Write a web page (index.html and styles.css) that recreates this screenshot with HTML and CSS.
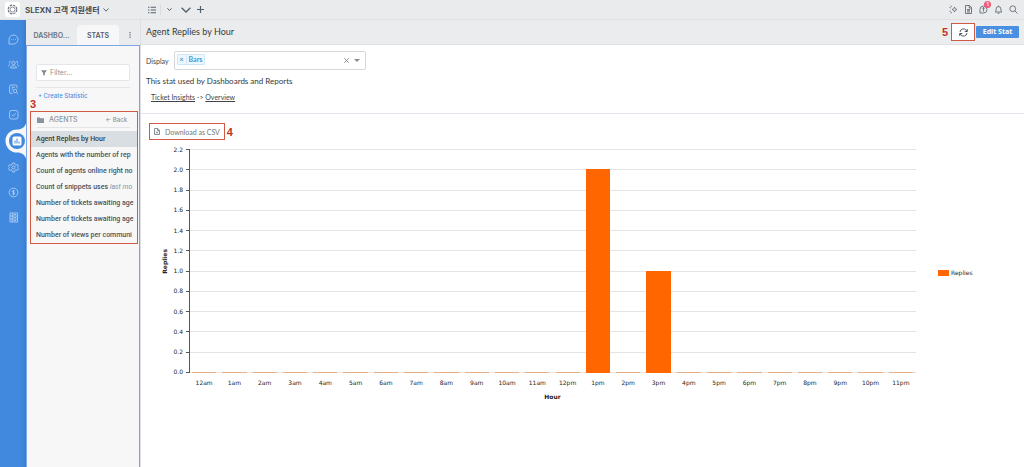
FILE: index.html
```html
<!DOCTYPE html>
<html lang="ko">
<head>
<meta charset="utf-8">
<title>Agent Replies by Hour</title>
<link rel="stylesheet" href="styles.css">
</head>
<body>
<div class="app">
  <header class="topbar">
    <div class="brand">
      <span class="logo"><svg width="11" height="11" viewBox="0 0 22 22" fill="none" stroke="#6a747d" stroke-width="1.6"><circle cx="11" cy="11" r="8.6" stroke-width="2.4" stroke-dasharray="5 1.75"/><circle cx="11" cy="11" r="5"/></svg></span>
      <button class="workspace" type="button">SLEXN 고객 지원센터
        <svg width="6" height="4" viewBox="0 0 6 4" fill="none" stroke="#5b6670"><path d="M.5.5L3 3.2 5.500.5"/></svg>
      </button>
    </div>
    <nav class="tools" aria-label="Views">
      <button type="button" aria-label="List"><svg width="8" height="8" viewBox="0 0 9 8" stroke="#52606c" stroke-width="1.200"><path d="M0 1h1.600M0 4h1.600M0 7h1.600M3 1h6M3 4h6M3 7h6"/></svg></button>
      <button class="list-menu" type="button" aria-label="List options"><svg width="5" height="3" viewBox="0 0 5 3" fill="none" stroke="#52606c"><path d="M.4.4l2.100 2L4.600.4"/></svg></button>
      <button type="button" aria-label="Expand"><svg width="10" height="6" viewBox="0 0 10 6" fill="none" stroke="#52606c" stroke-width="1.300"><path d="M.6.7L5 5 9.400.7"/></svg></button>
      <button type="button" aria-label="Add"><svg width="7" height="7" viewBox="0 0 7 7" stroke="#52606c" stroke-width="1.200"><path d="M3.500 0v7M0 3.500h7"/></svg></button>
    </nav>
    <div class="status">
      <button type="button" aria-label="Assistant"><svg width="9" height="9" viewBox="0 0 18 18" fill="none" stroke="#5b6670" stroke-width="1.500"><path d="M11 4l1.500 3.500L16 9l-3.500 1.500L11 14l-1.500-3.500L6 9l3.500-1.500zM4 1l1 3M1 5l3 1M4 17l1-3M1 13l3-1"/></svg></button>
      <button type="button" aria-label="Documents"><svg width="9" height="9" viewBox="0 0 18 18" fill="none" stroke="#5b6670" stroke-width="1.700"><path d="M3 1h8l4 4v12H3zM10.500 1v5H15M6 9h6M6 11.500h6M6 14h6"/></svg></button>
      <button class="chat" type="button" aria-label="Messages, 1 new"><svg width="9" height="9" viewBox="0 0 18 18" fill="none" stroke="#5b6670" stroke-width="1.700"><path d="M2 16V9a7 7 0 1 1 7 7zM9 5v8M6.500 7L9 5l2.500 2"/></svg><span class="count">1</span></button>
      <button type="button" aria-label="Notifications"><svg width="9" height="9" viewBox="0 0 18 18" fill="none" stroke="#5b6670" stroke-width="1.700"><path d="M9 1v2M2 14c2-1.500 2.200-3 2.200-6a4.800 4.800 0 0 1 9.600 0c0 3 .2 4.500 2.200 6zM7 16.500h4"/></svg></button>
      <button type="button" aria-label="Search"><svg width="9" height="9" viewBox="0 0 18 18" fill="none" stroke="#5b6670" stroke-width="1.700"><circle cx="7.500" cy="7.500" r="5.800"/><path d="M12 12l5 5"/></svg></button>
    </div>
  </header>

  <nav class="rail" aria-label="Main">
    <a href="#tickets" aria-label="Tickets"><svg viewBox="0 0 22 22"><path d="M2 20v-9a9 9 0 1 1 9 9zM6.500 11h1.500M10.300 11h1.500M14 11h1.500"/></svg></a>
    <a href="#people" aria-label="People"><svg viewBox="0 0 22 22"><circle cx="11" cy="8" r="3.300"/><path d="M5 18c0-6 12-6 12 0zM5.500 4.500a2.500 2.500 0 0 0-1.500 4.700M16.500 4.500a2.500 2.500 0 0 1 1.500 4.700M1 15c0-2 1-3.500 3-4M21 15c0-2-1-3.500-3-4"/></svg></a>
    <a href="#knowledge" aria-label="Knowledge"><svg viewBox="0 0 22 22"><path d="M9 19H6a3 3 0 0 1-3-3V5a3 3 0 0 1 3-3h9a3 3 0 0 1 3 3v4M7 6.500h7M7 10h3M7 13.500h1"/><circle cx="14" cy="14" r="3.500"/><path d="M16.500 16.500l3.500 3.500"/></svg></a>
    <a href="#tasks" aria-label="Tasks"><svg viewBox="0 0 22 22"><rect x="3" y="3" width="17" height="17" rx="4"/><path d="M7.500 11.500l3 3 5-6"/></svg></a>
    <a class="active" href="#reports" aria-label="Reports"><svg viewBox="0 0 22 36"><path class="bay" d="M22 0v36c-1-4-4-6.500-9-6.500a11.500 11.500 0 0 1 0-23C18 6.500 21 4 22 0z"/><circle class="disc" cx="13" cy="18" r="8"/><rect class="tile" x="8.500" y="13.500" width="9" height="9" rx="1.500"/><path class="bars" d="M11 20.500v-3M13 20.500v-5M15 20.500v-2"/></svg></a>
    <a href="#admin" aria-label="Admin"><svg viewBox="0 0 22 22"><path d="M9 2h4l.7 3 2.300 1.300 3-.9 2 3.500L18.800 11l2.200 2.100-2 3.500-3-.9-2.300 1.300L13 20H9l-.7-3L6 15.700l-3 .9-2-3.500L3.200 11 1 8.900l2-3.500 3 .9L8.300 5z"/><circle cx="11" cy="11" r="3"/></svg></a>
    <a href="#billing" aria-label="Billing"><svg viewBox="0 0 22 22"><circle cx="11" cy="11" r="8.700"/><path d="M13.500 8.500c-1-1.500-5-1.300-5 .7 0 2.500 5 1.200 5 3.700 0 2-4 2.200-5.200.6M11 5.500v11"/></svg></a>
    <a href="#storage" aria-label="Storage"><svg viewBox="0 0 22 22"><path d="M4 2h15v18H4zM4 8h15M4 14h15M8.500 2v18M11 5h5M11 11h5M11 17h5"/></svg></a>
  </nav>

  <aside class="sidebar">
    <div class="tabs" role="tablist">
      <button type="button" role="tab" aria-selected="false">DASHBO...</button>
      <button class="selected" type="button" role="tab" aria-selected="true">STATS</button>
      <button class="more" type="button" aria-label="More"><svg width="2" height="6" viewBox="0 0 2 6" fill="#5b6670"><circle cx="1" cy=".8" r=".7"/><circle cx="1" cy="3" r=".7"/><circle cx="1" cy="5.200" r=".7"/></svg></button>
    </div>
    <div class="panel">
      <div class="search">
        <label class="filter">
          <svg width="6" height="6" viewBox="0 0 6 6" fill="#7e8890"><path d="M0 .3h6L3.800 3v2.700L2.200 5V3z"/></svg>
          <input type="text" placeholder="Filter..." aria-label="Filter statistics">
        </label>
        <a class="create" href="#create">+ Create Statistic</a>
      </div>
      <section class="group">
        <span class="mark mark-above">3</span>
        <div class="group-head">
          <svg width="7" height="6" viewBox="0 0 7 6" fill="#8a939b"><path d="M0 .5h2.700l.7.8H7V6H0z"/></svg>
          <h2>AGENTS</h2>
          <a href="#back">← Back</a>
        </div>
        <ul>
          <li class="current"><a href="#s1">Agent Replies by Hour</a></li>
          <li><a href="#s2">Agents with the number of rep</a></li>
          <li><a href="#s3">Count of agents online right no</a></li>
          <li><a href="#s4">Count of snippets uses <em>last mo</em></a></li>
          <li><a href="#s5">Number of tickets awaiting age</a></li>
          <li><a href="#s6">Number of tickets awaiting age</a></li>
          <li><a href="#s7">Number of views per communi</a></li>
        </ul>
      </section>
    </div>
  </aside>

  <main class="content">
    <div class="page-head">
      <h1>Agent Replies by Hour</h1>
      <span class="mark">5</span>
      <button class="refresh" type="button" aria-label="Refresh"><svg width="9" height="9" viewBox="0 0 18 18" fill="none" stroke="#3f474e" stroke-width="1.800"><path d="M2 8a7 7 0 0 1 12.500-3.500L16.500 7M16.500 2v5h-5M16 10a7 7 0 0 1-12.500 3.500L1.500 11M1.500 16v-5h5"/></svg></button>
      <button class="edit" type="button">Edit Stat</button>
    </div>
    <section class="settings">
      <div class="field">
        <label for="display">Display</label>
        <div class="combo">
          <span class="chip"><button type="button" aria-label="Remove Bars">×</button><span>Bars</span></span>
          <input id="display" type="text">
          <button type="button" aria-label="Clear"><svg width="5" height="5" viewBox="0 0 5 5" stroke="#8c8c8c"><path d="M.3.3l4.400 4.400M4.700.3L.3 4.700"/></svg></button>
          <button type="button" aria-label="Open"><svg width="6" height="3" viewBox="0 0 6 3" fill="#8c8c8c"><path d="M0 0h6L3 3z"/></svg></button>
        </div>
      </div>
      <h2>This stat used by Dashboards and Reports</h2>
      <p class="trail"><a href="#insights">Ticket Insights</a> -&gt; <a href="#overview">Overview</a></p>
    </section>
    <section class="report">
      <div class="export">
        <button type="button"><svg width="6" height="7" viewBox="0 0 12 14" fill="none" stroke="#6f767c" stroke-width="1.600"><path d="M1 1h6.500L11 4.500V13H1zM7 1v4h4M4 7l4 4M8 7l-4 4"/></svg>Download as CSV</button>
        <span class="mark">4</span>
      </div>
      <figure class="chart">
        <div class="y-title"><span>Replies</span></div>
        <div class="y-axis">
          <span>2.2</span><span>2.0</span><span>1.8</span><span>1.6</span><span>1.4</span><span>1.2</span><span>1.0</span><span>0.8</span><span>0.6</span><span>0.4</span><span>0.2</span><span>0.0</span>
        </div>
        <div class="grid-lines"><i></i><i></i><i></i><i></i><i></i><i></i><i></i><i></i><i></i><i></i><i></i><i></i></div>
        <div class="columns">
          <i></i><i></i><i></i><i></i><i></i><i></i><i></i><i></i><i></i><i></i><i></i><i></i><i></i><i class="filled" style="height:90.9%"></i><i></i><i class="filled" style="height:45.5%"></i><i></i><i></i><i></i><i></i><i></i><i></i><i></i><i></i>
        </div>
        <div class="x-axis">
          <span>12am</span><span>1am</span><span>2am</span><span>3am</span><span>4am</span><span>5am</span><span>6am</span><span>7am</span><span>8am</span><span>9am</span><span>10am</span><span>11am</span><span>12pm</span><span>1pm</span><span>2pm</span><span>3pm</span><span>4pm</span><span>5pm</span><span>6pm</span><span>7pm</span><span>8pm</span><span>9pm</span><span>10pm</span><span>11pm</span>
        </div>
        <div class="x-title">Hour</div>
        <figcaption class="legend"><i></i>Replies</figcaption>
      </figure>
    </section>
  </main>
</div>
</body>
</html>
```

FILE: styles.css
```css
* { box-sizing: border-box; }
body { margin: 0; font-family: Lato, "Noto Sans CJK KR", sans-serif; font-size: 7px; color: #404448; background: #fff; }
button { display: inline-flex; align-items: center; justify-content: center; padding: 0; border: 0; background: none; font: inherit; color: inherit; }
h1, h2, p, ul, figure { margin: 0; padding: 0; font-weight: 400; }
ul { list-style: none; }
a { color: inherit; text-decoration: none; }
svg { display: block; flex: none; }

.app { display: grid; grid-template: 20px 1fr / 26px 114px minmax(0, 1fr); min-height: 100vh; }
.mark { font: 700 11px/12px "Liberation Sans", sans-serif; color: #c0341d; }

.topbar { grid-column: 1 / -1; display: flex; align-items: center; background: #e9ebed; border-bottom: 1px solid #dfe1e4; }
.brand { display: flex; align-items: center; gap: 5px; width: 140px; padding-left: 5px; }
.logo { display: grid; place-items: center; width: 15px; height: 15px; border-radius: 2px; background: #fff; }
.workspace { gap: 3px; font: 600 8px/12px Inter, "Noto Sans CJK KR", sans-serif; color: #40484f; white-space: nowrap; }
.tools { display: flex; align-items: center; gap: 9px; height: 100%; padding-left: 8px; }
.tools button:nth-child(4) { margin-left: -3px; }
.list-menu { height: 10px; margin-left: -5px; padding-left: 6px; border-left: 1px solid #d9dcdf; }
.status { display: flex; gap: 6px; margin-left: auto; padding-right: 6px; }
.chat { position: relative; }
.count { position: absolute; left: 5px; top: -4px; width: 7px; height: 7px; border-radius: 50%; background: #f2577c; color: #fff; font: 700 5px/7px Inter, sans-serif; text-align: center; }

.rail { display: flex; flex-direction: column; align-items: center; gap: 14px; padding-top: 14px; background: linear-gradient(90deg, #4189de 80%, #3b7dcd); }
.rail a { display: block; }
.rail svg { width: 11px; height: 11px; fill: none; stroke: #b9d6f5; stroke-width: 1.6; }
.rail .active { align-self: flex-end; margin: -11px 0; }
.rail .active svg { width: 22px; height: 36px; }
.rail .active .bay { fill: #f7f7f8; stroke: none; }
.rail .active .disc { fill: #4189de; stroke: none; }
.rail .active .tile { fill: #fff; stroke: none; }
.rail .active .bars { stroke: #4189de; stroke-width: 1; }

.sidebar { display: flex; flex-direction: column; background: #f7f7f8; font-family: Inter, sans-serif; color: #4a545d; }
.tabs { display: flex; height: 25px; padding-top: 5px; background: #e9ebed; font-size: 7px; font-weight: 600; color: #6a737b; }
.tabs button { flex: 1 1 50px; }
.tabs .selected { flex: 0 1 42px; background: #f7f7f8; border-radius: 4px 4px 0 0; color: #56606a; }
.tabs .more { flex: 0 0 21px; }
.panel { flex: 1; padding-bottom: 8px; border: 1px solid #7da6e6; border-width: 1px 1px 0; }
.search { padding: 18px 9px 0; }
.filter { display: flex; align-items: center; gap: 3px; height: 17px; padding: 0 4px; border: 1px solid #e4e6e9; border-radius: 2px; background: #fff; }
.filter input { min-width: 0; flex: 1; padding: 0; border: 0; outline: 0; background: none; font: 7px Inter, sans-serif; color: #4a545d; }
.filter input::placeholder { color: #8b939a; opacity: 1; }
.create { display: block; margin-top: 6px; padding: 4px 2px 0; border-top: 1px solid #e4e5e7; font-size: 6px; line-height: 8px; font-weight: 500; color: #4a90e2; }
.group { position: relative; margin: 11px 1px 0 3px; border: 1px solid #cf5a46; }
.mark-above { position: absolute; left: -1px; top: -14px; }
.group-head { display: flex; align-items: center; gap: 5px; height: 16px; margin: 0 7px 3px 6px; border-bottom: 1px solid #e2e4e6; font-size: 6px; font-weight: 500; color: #8a939b; }
.group-head h2 { flex: 1; font: inherit; font-size: 7px; }
.group-head a { padding-right: 3px; }
.group li { height: 16px; padding: 0 4px 0 5px; font: 500 7px/16px Roboto, sans-serif; }
.group li a { display: block; white-space: nowrap; }
.group li em { font-weight: 400; color: #8a939b; }
.group .current { background: #d9dee2; color: #343d45; }

.content { display: flex; flex-direction: column; border-left: 1px solid #dcdfe6; }
.page-head { display: flex; align-items: center; height: 25px; padding: 0 5px; background: #ebecee; border-bottom: 1px solid #dfe1e3; }
.page-head h1 { flex: 1; font-size: 9px; line-height: 12px; color: #36393c; }
.refresh { width: 24px; height: 18px; margin: 0 1px 0 3px; border: 1px solid #cf5a46; background: #fff; }
.edit { width: 43px; height: 12px; border-radius: 1px; background: #4a90e2; font: 700 7px/12px "Open Sans", sans-serif; color: #fff; }
.settings { padding: 6px 5px 11px; border-bottom: 1px solid #e1e4ea; }
.field { display: flex; align-items: center; gap: 5px; }
.combo { display: flex; align-items: center; gap: 5px; flex: 0 1 192px; min-width: 0; height: 19px; padding: 0 5px 0 2px; border: 1px solid #d5d7d9; border-radius: 2px; }
.combo input { flex: 1; min-width: 0; border: 0; outline: 0; padding: 0; font: inherit; }
.chip { display: flex; align-self: flex-start; height: 11px; margin-top: 2px; border: 1px solid #cfe5f8; border-radius: 1px; background: #edf7ff; font-size: 7px; line-height: 9px; font-weight: 700; color: #4598d4; }
.chip button { width: 9px; border-right: 1px solid #cfe5f8; }
.chip span { padding: 0 2px; }
.settings h2 { margin-top: 5px; font-size: 8px; line-height: 12px; color: #36393c; }
.trail { margin: 5px 0 0 5px; line-height: 10px; }
.trail a { text-decoration: underline; }

.report { padding: 9px 8px 0; }
.export { display: flex; align-items: center; gap: 2px; }
.export button { gap: 5px; height: 17px; padding: 0 4px; border: 1px solid #cf5a46; color: #6f767c; }
.chart { display: grid; grid-template: 224px 20px 10px / 22px 18px minmax(0, 1fr) 100px; margin-top: 9px; font: 6px/8px "DejaVu Sans", sans-serif; color: #1e1e1e; }
.y-title { grid-area: 1 / 1; display: flex; align-items: center; padding-left: 12px; font-weight: 700; }
.y-title span { writing-mode: vertical-rl; rotate: 180deg; }
.y-axis { grid-area: 1 / 2; display: flex; flex-direction: column; justify-content: space-between; margin: -4px 0; }
.y-axis span { display: flex; align-items: center; justify-content: flex-end; gap: 3px; height: 9px; }
.y-axis span::after { content: ""; width: 3px; height: 1px; background: #555; }
.grid-lines { grid-area: 1 / 3; display: flex; flex-direction: column; justify-content: space-between; border-left: 1px solid #555; }
.grid-lines i { height: 1px; background: #e4e4e4; }
.columns, .x-axis { display: grid; grid-template-columns: repeat(24, minmax(0, 1fr)); justify-items: center; }
.columns { grid-area: 1 / 3; align-items: end; }
.columns i { width: 80%; height: 1px; background: #e8ae86; }
.columns .filled { background: #f60; }
.x-axis { grid-area: 2 / 3; padding-top: 6px; }
.x-title { grid-area: 3 / 3; text-align: center; font-weight: 700; }
.legend { grid-area: 1 / 4; display: flex; align-items: center; gap: 2px; padding: 24px 0 0 22px; }
.legend i { width: 11px; height: 6px; background: #f60; }
```
